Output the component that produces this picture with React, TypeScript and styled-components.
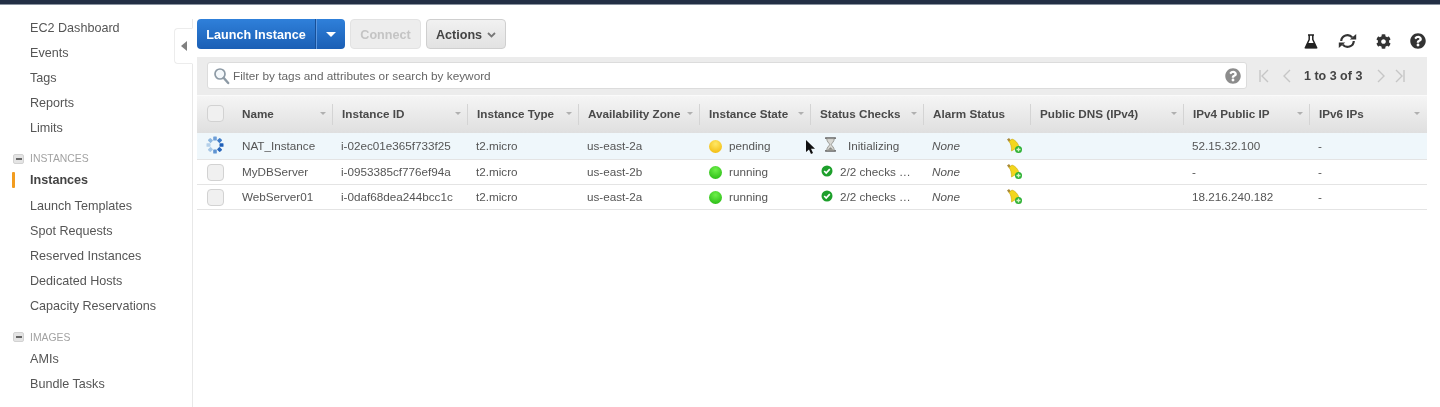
import styled, { createGlobalStyle } from "styled-components";
import { FaCog, FaQuestionCircle } from "react-icons/fa";

const GlobalStyle = createGlobalStyle`
  html, body {
    margin: 0;
    padding: 0;
    background: #fff;
    overflow: hidden;
  }
  * {
    box-sizing: border-box;
  }
`;

const COLUMNS = "36px 100px 135px 111px 121px 111px 113px 107px 153px 126px 117px";

const Page = styled.div`
  width: 1440px;
  height: 407px;
  position: relative;
  overflow: hidden;
  display: flex;
  flex-direction: column;
  font-family: "Liberation Sans", Arial, sans-serif;
  font-size: 12.5px;
  color: #555;
  filter: blur(0.5px);
`;

const TopBar = styled.div`
  height: 5px;
  flex: none;
  background: #232f45;
  border-bottom: 1px solid #8a93a0;
`;

const Body = styled.div`
  flex: 1;
  display: flex;
  min-height: 0;
`;

const Sidebar = styled.nav`
  width: 193px;
  flex: none;
  position: relative;
  padding-top: 11px;

  &::after {
    content: "";
    position: absolute;
    right: 0;
    top: 14px;
    bottom: 0;
    width: 1px;
    background: #e8e8e8;
  }
`;

const NavItem = styled.div<{ $active?: boolean }>`
  height: ${(p) => (p.$active ? 26 : 25)}px;
  line-height: 25px;
  padding-left: 30px;
  font-size: 12.6px;
  color: ${(p) => (p.$active ? "#444" : "#555")};
  font-weight: ${(p) => (p.$active ? "bold" : "normal")};
  position: relative;

  ${(p) =>
    p.$active &&
    `
    &::before {
      content: "";
      position: absolute;
      left: 12px;
      top: 4px;
      width: 3px;
      height: 16px;
      background: #f29c1f;
      border-radius: 1px;
    }
  `}
`;

const NavHeading = styled.div<{ $height: number }>`
  height: ${(p) => p.$height}px;
  margin-top: 8px;
  padding-left: 13px;
  display: flex;
  align-items: center;
  gap: 6px;
  font-size: 10.4px;
  color: #a2a2a2;
`;

const CollapseBox = styled.span`
  width: 11px;
  height: 10px;
  border-radius: 2px;
  background: #e4e4e4;
  border: 1px solid #d2d2d2;
  display: flex;
  align-items: center;
  justify-content: center;

  &::after {
    content: "";
    width: 6px;
    height: 2px;
    background: #666;
  }
`;

const SidebarTab = styled.div`
  position: absolute;
  z-index: 1;
  top: 23px;
  right: 0;
  width: 19px;
  height: 36px;
  background: #fff;
  border: 1px solid #ececec;
  border-right: 1px solid #fff;
  border-radius: 4px 0 0 4px;
  display: flex;
  align-items: center;
  justify-content: center;

  &::after {
    content: "";
    border-style: solid;
    border-width: 5px 6px 5px 0;
    border-color: transparent #808080 transparent transparent;
  }
`;

const Main = styled.main`
  flex: 1;
  min-width: 0;
  padding: 14px 13px 0 4px;
`;

const Toolbar = styled.div`
  height: 38px;
  display: flex;
  align-items: flex-start;
  gap: 5px;
`;

const SplitButton = styled.div`
  width: 148px;
  height: 30px;
  display: flex;
  border-radius: 4px;
  background: linear-gradient(#2f80da, #1b5fb5);
  color: #fff;
  font-weight: bold;
  font-size: 12.6px;
`;

const SplitLabel = styled.div`
  width: 119px;
  line-height: 32px;
  text-align: center;
  border-right: 1px solid #174f97;
`;

const SplitCaret = styled.div`
  flex: 1;
  display: flex;
  align-items: center;
  justify-content: center;
  border-left: 1px solid #5b97e0;

  &::after {
    content: "";
    border-style: solid;
    border-width: 5px 5px 0 5px;
    border-color: #fff transparent transparent transparent;
  }
`;

const GreyButton = styled.div<{ $width: number; $disabled?: boolean }>`
  width: ${(p) => p.$width}px;
  height: 30px;
  padding-top: 1px;
  border-radius: 4px;
  border: 1px solid ${(p) => (p.$disabled ? "#e2e2e2" : "#cfcfcf")};
  background: ${(p) => (p.$disabled ? "#ededed" : "linear-gradient(#f1f1f1, #e2e2e2)")};
  color: ${(p) => (p.$disabled ? "#c4c4c4" : "#444")};
  font-weight: bold;
  font-size: 12.6px;
  display: flex;
  align-items: center;
  justify-content: center;
  gap: 5px;
`;

const ToolIcons = styled.div`
  margin-left: auto;
  margin-right: -8px;
  height: 38px;
  padding-top: 13px;
  display: flex;
  align-items: flex-start;
  color: #333;
`;

const ToolIcon = styled.span<{ $width: number }>`
  width: ${(p) => p.$width}px;
  height: 18px;
  display: flex;
  justify-content: center;
  align-items: center;
`;

const FilterBar = styled.div`
  height: 38px;
  background: #ececec;
  padding: 5px 0 0 10px;
  display: flex;
  align-items: flex-start;
`;

const SearchBox = styled.div`
  width: 1040px;
  height: 27px;
  background: #fff;
  border: 1px solid #dcdcdc;
  border-radius: 3px;
  padding: 0 5px;
  display: flex;
  align-items: center;
  gap: 3px;
  font-size: 11.8px;
  color: #666;
`;

const SearchText = styled.span`
  flex: 1;
`;

const Pager = styled.div`
  height: 27px;
  padding-left: 11px;
  display: flex;
  align-items: center;
  color: #c6c6c6;
`;

const PagerLabel = styled.span`
  font-weight: bold;
  font-size: 12.5px;
  color: #444;
  margin: 0 13px 0 1px;
  white-space: nowrap;
`;

const PagerIcon = styled.svg<{ $gap: number }>`
  width: 12px;
  height: 14px;
  margin-right: ${(p) => p.$gap}px;
  fill: none;
  stroke: currentColor;
  stroke-width: 1.4;
`;

const HeaderRow = styled.div`
  height: 38px;
  display: grid;
  grid-template-columns: ${COLUMNS};
  background: linear-gradient(#f5f5f5, #dfdfdf);
  border-top: 1px solid #fafafa;
`;

const HeaderCheckCell = styled.div`
  display: flex;
  justify-content: center;
  align-items: center;
  padding-bottom: 2px;
`;

const HeaderCell = styled.div<{ $noBorder?: boolean }>`
  position: relative;
  display: flex;
  align-items: center;
  justify-content: space-between;
  padding: 0 7px 2px 9px;
  font-weight: bold;
  font-size: 11.7px;
  color: #4a4a4a;
  white-space: nowrap;

  &::after {
    content: "";
    position: absolute;
    right: 0;
    top: 8px;
    bottom: 8px;
    width: 1px;
    background: ${(p) => (p.$noBorder ? "transparent" : "#d4d4d4")};
  }
`;

const SortCaret = styled.span`
  flex: none;
  border-style: solid;
  border-width: 3px 3.5px 0 3.5px;
  border-color: #b0b0b0 transparent transparent transparent;
`;

const Row = styled.div<{ $selected?: boolean; $height: number }>`
  height: ${(p) => p.$height}px;
  display: grid;
  grid-template-columns: ${COLUMNS};
  align-items: center;
  background: ${(p) => (p.$selected ? "#eff7fb" : "#fff")};
  border-bottom: 1px solid #e4e4e4;
  font-size: 11.7px;
  color: #555;
`;

const Cell = styled.div`
  padding: 0 0 2px 8px;
  display: flex;
  align-items: center;
  white-space: nowrap;
  overflow: hidden;
`;

const NameCell = styled(Cell)`
  padding-left: 9px;
`;

const CheckCell = styled.div`
  display: flex;
  justify-content: center;
`;

const SpinnerWrap = styled.span`
  display: flex;
  margin-bottom: 2px;
`;

const Checkbox = styled.span`
  width: 17px;
  height: 17px;
  border-radius: 4px;
  background: #f0f0f0;
  border: 1px solid #d2d2d2;
`;

const StateDot = styled.span<{ $color: "yellow" | "green" }>`
  width: 13px;
  height: 13px;
  border-radius: 50%;
  margin: 2px 7px 0 1px;
  background: ${(p) =>
    p.$color === "yellow"
      ? "radial-gradient(circle at 50% 30%, #ffe866, #f0b400)"
      : "radial-gradient(circle at 50% 30%, #6ef04a, #1fb30d)"};
`;

const AlarmCell = styled(Cell)`
  justify-content: space-between;
  padding-right: 8px;
  overflow: visible;
`;

const NoneText = styled.span`
  font-style: italic;
`;

const StatusIconSlot = styled.span<{ $width: number; $inset: number; $lift: number }>`
  width: ${(p) => p.$width}px;
  margin-left: 2px;
  padding-left: ${(p) => p.$inset}px;
  margin-bottom: ${(p) => p.$lift}px;
  display: flex;
  align-items: center;
`;

const Cursor = styled.svg`
  position: absolute;
  left: 805px;
  top: 140px;
  width: 10px;
  height: 16px;
`;

const navTop = ["EC2 Dashboard", "Events", "Tags", "Reports", "Limits"];
const navInstances = [
  "Launch Templates",
  "Spot Requests",
  "Reserved Instances",
  "Dedicated Hosts",
  "Capacity Reservations",
];
const navImages = ["AMIs", "Bundle Tasks"];

const headers = [
  "Name",
  "Instance ID",
  "Instance Type",
  "Availability Zone",
  "Instance State",
  "Status Checks",
  "Alarm Status",
  "Public DNS (IPv4)",
  "IPv4 Public IP",
  "IPv6 IPs",
];

const rows = [
  {
    name: "NAT_Instance",
    id: "i-02ec01e365f733f25",
    zone: "us-east-2a",
    state: "pending",
    ip: "52.15.32.100",
    height: 27,
  },
  {
    name: "MyDBServer",
    id: "i-0953385cf776ef94a",
    zone: "us-east-2b",
    state: "running",
    ip: "-",
    height: 25,
  },
  {
    name: "WebServer01",
    id: "i-0daf68dea244bcc1c",
    zone: "us-east-2a",
    state: "running",
    ip: "18.216.240.182",
    height: 25,
  },
];

const spinnerColors = ["#6f9fd8", "#3f7cc8", "#1f5fb8", "#2a68bc", "#5f94d2", "#a5c6e6", "#b4d0ea", "#8fb8e0"];

function Flask() {
  return (
    <svg width="14" height="15" viewBox="0 0 14 15">
      <path d="M4 1h6M5.2 1v4.5L1.5 13.5h11L8.8 5.5V1" fill="none" stroke="#222" strokeWidth="1.5" />
      <path d="M3.7 9h6.6l2.7 5.5H1z" fill="#222" />
    </svg>
  );
}

function Refresh() {
  return (
    <svg width="19" height="16" viewBox="0 0 19 16">
      <path d="M3.2 8a6.2 6.2 0 0 1 11-3.600" fill="none" stroke="#333" strokeWidth="2.200" />
      <path d="M15.800 8a6.200 6.200 0 0 1-11 3.600" fill="none" stroke="#333" strokeWidth="2.200" />
      <path d="M11.800 6.400h6.400V1zM7.200 9.600H.8V15z" fill="#333" />
    </svg>
  );
}

function SearchIcon() {
  return (
    <svg width="17" height="18" viewBox="0 0 17 18">
      <circle cx="7" cy="7" r="5" fill="#f4f8fb" stroke="#8d9aa5" strokeWidth="1.7" />
      <path d="M10.8 11l4.4 5" stroke="#8d9aa5" strokeWidth="2.4" strokeLinecap="round" />
    </svg>
  );
}

function Spinner() {
  return (
    <svg width="18" height="18" viewBox="0 0 18 18">
      {spinnerColors.map((color, i) => (
        <rect key={color} x="7.200" y="0.500" width="3.600" height="4" rx="0.600" fill={color} transform={`rotate(${i * 45} 9 9)`} />
      ))}
    </svg>
  );
}

function Hourglass() {
  return (
    <svg width="13" height="15" viewBox="0 0 12 14">
      <path d="M1 1h10M1 13h10" stroke="#666" strokeWidth="1.6" />
      <path d="M2.500 1.500h7c0 3-2.300 4-2.700 5.500.4 1.500 2.700 2.500 2.700 5.500h-7c0-3 2.300-4 2.700-5.500C4.800 5.500 2.500 4.500 2.500 1.500z" fill="#d8d8d4" stroke="#8b8b85" strokeWidth=".8" />
      <path d="M3.500 12h5L6 9.500z" fill="#8b8b85" />
    </svg>
  );
}

function CheckBadge() {
  return (
    <svg width="12" height="12" viewBox="0 0 12 12">
      <circle cx="6" cy="6" r="5.500" fill="#1d9f2b" />
      <path d="M3.200 6l2 2 3.600-3.800" fill="none" stroke="#fff" strokeWidth="1.700" />
    </svg>
  );
}

function AlarmBell() {
  return (
    <svg width="17" height="17" viewBox="0 0 17 17">
      <path d="M1 2.500L3 1l2 2.500-2 1.500z" fill="#a98a3a" />
      <path d="M3 4.500L6 2c3 .8 6 4 7 7.500L5.500 14C5.500 10 5 7 3 4.500z" fill="#f3d61c" stroke="#c9a70f" strokeWidth=".6" />
      <circle cx="12.500" cy="12.500" r="3.500" fill="#2eb135" />
      <path d="M12.500 10.500v4M10.500 12.500h4" stroke="#d6f5c4" strokeWidth="1.300" />
    </svg>
  );
}

function App() {
  return (
    <Page>
      <GlobalStyle />
      <TopBar />
      <Body>
        <Sidebar>
          {navTop.map((item) => (
            <NavItem key={item}>{item}</NavItem>
          ))}
          <NavHeading $height={19}>
            <CollapseBox />
            INSTANCES
          </NavHeading>
          <NavItem $active>Instances</NavItem>
          {navInstances.map((item) => (
            <NavItem key={item}>{item}</NavItem>
          ))}
          <NavHeading $height={20}>
            <CollapseBox />
            IMAGES
          </NavHeading>
          {navImages.map((item) => (
            <NavItem key={item}>{item}</NavItem>
          ))}
          <SidebarTab />
        </Sidebar>
        <Main>
          <Toolbar>
            <SplitButton>
              <SplitLabel>Launch Instance</SplitLabel>
              <SplitCaret />
            </SplitButton>
            <GreyButton $width={71} $disabled>
              Connect
            </GreyButton>
            <GreyButton $width={80}>
              Actions
              <svg width="9" height="6" viewBox="0 0 9 6">
                <path d="M1 1l3.500 3.500L8 1" fill="none" stroke="#777" strokeWidth="1.800" />
              </svg>
            </GreyButton>
            <ToolIcons>
              <ToolIcon $width={36}>
                <Flask />
              </ToolIcon>
              <ToolIcon $width={36}>
                <Refresh />
              </ToolIcon>
              <ToolIcon $width={36}>
                <FaCog size={15} />
              </ToolIcon>
              <ToolIcon $width={34}>
                <FaQuestionCircle size={16} />
              </ToolIcon>
            </ToolIcons>
          </Toolbar>
          <FilterBar>
            <SearchBox>
              <SearchIcon />
              <SearchText>Filter by tags and attributes or search by keyword</SearchText>
              <FaQuestionCircle size={16} color="#8c8c8c" />
            </SearchBox>
            <Pager>
              <PagerIcon $gap={11} viewBox="0 0 12 14">
                <path d="M2 1v12M10 1L4 7l6 6" />
              </PagerIcon>
              <PagerIcon $gap={10} viewBox="0 0 12 14">
                <path d="M9 1L3 7l6 6" />
              </PagerIcon>
              <PagerLabel>1 to 3 of 3</PagerLabel>
              <PagerIcon $gap={7} viewBox="0 0 12 14">
                <path d="M3 1l6 6-6 6" />
              </PagerIcon>
              <PagerIcon $gap={0} viewBox="0 0 12 14">
                <path d="M2 1l6 6-6 6M10 1v12" />
              </PagerIcon>
            </Pager>
          </FilterBar>
          <HeaderRow>
            <HeaderCheckCell>
              <Checkbox />
            </HeaderCheckCell>
            {headers.map((h) => (
              <HeaderCell key={h} $noBorder={h === "IPv6 IPs"}>
                {h}
                {h !== "Alarm Status" && <SortCaret />}
              </HeaderCell>
            ))}
          </HeaderRow>
          {rows.map((r, i) => (
            <Row key={r.id} $selected={i === 0} $height={r.height}>
              <CheckCell>
                {i === 0 ? (
                  <SpinnerWrap>
                    <Spinner />
                  </SpinnerWrap>
                ) : (
                  <Checkbox />
                )}
              </CheckCell>
              <NameCell>{r.name}</NameCell>
              <Cell>{r.id}</Cell>
              <Cell>t2.micro</Cell>
              <Cell>{r.zone}</Cell>
              <Cell>
                <StateDot $color={r.state === "pending" ? "yellow" : "green"} />
                {r.state}
              </Cell>
              <Cell>
                {r.state === "pending" ? (
                  <>
                    <StatusIconSlot $width={27} $inset={3} $lift={1}>
                      <Hourglass />
                    </StatusIconSlot>
                    Initializing
                  </>
                ) : (
                  <>
                    <StatusIconSlot $width={19} $inset={0} $lift={0}>
                      <CheckBadge />
                    </StatusIconSlot>
                    2/2 checks …
                  </>
                )}
              </Cell>
              <AlarmCell>
                <NoneText>None</NoneText>
                <AlarmBell />
              </AlarmCell>
              <Cell />
              <Cell>{r.ip}</Cell>
              <Cell>-</Cell>
            </Row>
          ))}
        </Main>
      </Body>
      <Cursor viewBox="0 0 10 16">
        <path d="M1 0v12l3-2.500 2 4.500 2-1-2-4.300h4z" fill="#111" />
      </Cursor>
    </Page>
  );
}

export default App;
